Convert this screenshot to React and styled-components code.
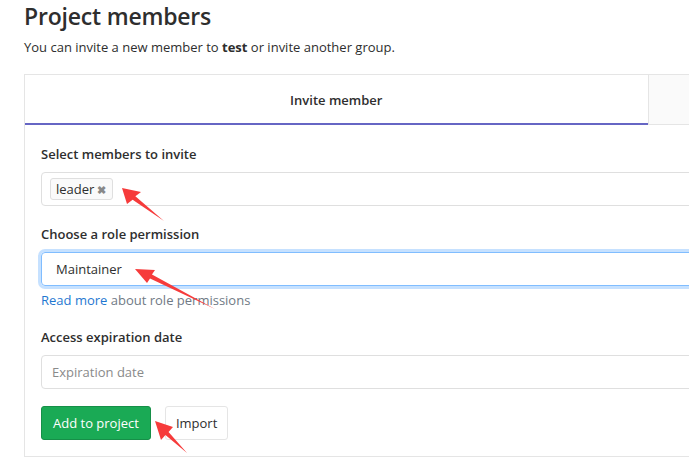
import React from 'react';
import styled, { createGlobalStyle } from 'styled-components';

const GlobalStyle = createGlobalStyle`
  body {
    margin: 0;
    background: #fff;
    font-family: "Open Sans", "Noto Sans", sans-serif;
    color: #2e2e2e;
    overflow: hidden;
  }
`

const Page = styled.div`
  position: relative;
  width: 689px;
  height: 467px;
  overflow: hidden;
  padding-left: 24px;
  box-sizing: border-box;
`

const Title = styled.h3`
  margin: 1px 0 0;
  font-size: 23px;
  line-height: 30px;
  font-weight: 600;
  color: #2e2e2e;
  letter-spacing: -0.2px;
`

const Lead = styled.p`
  margin: 6px 0 0;
  font-size: 13px;
  line-height: 20px;
`

const Card = styled.div`
  margin-top: 17px;
  width: 1248px;
  border: 1px solid #e5e5e5;
  box-sizing: border-box;
`

const Tabs = styled.div`
  display: flex;
`

const Tab = styled.div`
  flex: 1;
  height: 50px;
  box-sizing: border-box;
  display: flex;
  align-items: center;
  justify-content: center;
  font-size: 13px;
  font-weight: 600;
  background: ${p => (p.$active ? '#fff' : '#fafafa')};
  border-bottom: ${p => (p.$active ? '2px solid #6666c4' : '1px solid #e5e5e5')};
  border-left: ${p => (p.$active ? 'none' : '1px solid #e5e5e5')};
  padding-top: 2px;
`

const Body = styled.div`
  padding: 19px 16px 16px;
`

const Group = styled.div`
  margin-bottom: ${p => p.$mb || 18}px;
`

const Label = styled.div`
  font-size: 13px;
  font-weight: 600;
  line-height: 20px;
  margin-bottom: 8px;
`

const Field = styled.div`
  height: 34px;
  box-sizing: border-box;
  border: 1px solid ${p => (p.$focus ? '#80bdff' : '#dfdfdf')};
  border-radius: 4px;
  box-shadow: ${p => (p.$focus ? '0 0 0 3px rgba(128, 189, 255, 0.45)' : 'none')};
  display: flex;
  align-items: center;
  padding-left: ${p => p.$pad || 10}px;
  font-size: 13px;
  color: ${p => (p.$placeholder ? '#8a8a8a' : '#2e2e2e')};
`

const Token = styled.span`
  display: inline-flex;
  align-items: center;
  height: 22px;
  box-sizing: border-box;
  padding: 0 6px 0 5px;
  border: 1px solid #dfdfdf;
  border-radius: 3px;
  background: #fafafa;
  font-size: 13px;
  gap: 3px;
`

const Remove = styled.span`
  color: #888;
  font-size: 11px;
  font-weight: 700;
`

const Help = styled.div`
  margin-top: 4px;
  font-size: 13px;
  line-height: 20px;
  color: #707a85;
`

const Link = styled.a`
  color: #1f78d1;
  text-decoration: none;
`

const Actions = styled.div`
  display: flex;
  gap: 14px;
`

const Button = styled.button`
  height: 34px;
  padding: 0 ${p => (p.$primary ? 11 : 10)}px;
  font-family: inherit;
  font-size: 13px;
  border-radius: 3px;
  border: 1px solid ${p => (p.$primary ? '#168f48' : '#e5e5e5')};
  background: ${p => (p.$primary ? '#1aaa55' : '#fff')};
  color: ${p => (p.$primary ? '#fff' : '#2e2e2e')};
`

const Overlay = styled.svg`
  position: absolute;
  left: 0;
  top: 0;
  pointer-events: none;
`

// red annotation arrow: tip, two head wings, tapered shaft to tail
function Arrow({ tip, w1, w2, tail }) {
  const mx = (w1[0] + w2[0]) / 2
  const my = (w1[1] + w2[1]) / 2
  const dx = tail[0] - tip[0]
  const dy = tail[1] - tip[1]
  const len = Math.hypot(dx, dy)
  const nx = (-dy / len) * 2.2
  const ny = (dx / len) * 2.2
  const d = `M${tip[0]} ${tip[1]} L${w1[0]} ${w1[1]} L${mx - nx} ${my - ny} L${tail[0]} ${tail[1]} L${mx + nx} ${my + ny} L${w2[0]} ${w2[1]} Z`
  return <path d={d} fill="#f63b3b" />
}

export default function App() {
  return (
    <Page>
      <GlobalStyle />
      <Title>Project members</Title>
      <Lead>You can invite a new member to <b>test</b> or invite another group.</Lead>
      <Card>
        <Tabs>
          <Tab $active>Invite member</Tab>
          <Tab />
        </Tabs>
        <Body>
          <Group>
            <Label>Select members to invite</Label>
            <Field $pad={8}>
              <Token>leader <Remove>✖</Remove></Token>
            </Field>
          </Group>
          <Group $mb={17}>
            <Label>Choose a role permission</Label>
            <Field $focus $pad={14}>Maintainer</Field>
            <Help><Link>Read more</Link> about role permissions</Help>
          </Group>
          <Group $mb={17}>
            <Label>Access expiration date</Label>
            <Field $placeholder>Expiration date</Field>
          </Group>
          <Actions>
            <Button $primary>Add to project</Button>
            <Button>Import</Button>
          </Actions>
        </Body>
      </Card>
      <Overlay width="689" height="467" viewBox="0 0 689 467">
        <Arrow tip={[122, 188]} w1={[141, 192]} w2={[127, 204]} tail={[164, 221]} />
        <Arrow tip={[135, 269]} w1={[155, 270]} w2={[147, 283]} tail={[215, 309]} />
        <Arrow tip={[155, 421]} w1={[173, 427]} w2={[161, 440]} tail={[187, 453]} />
      </Overlay>
    </Page>
  )
}
